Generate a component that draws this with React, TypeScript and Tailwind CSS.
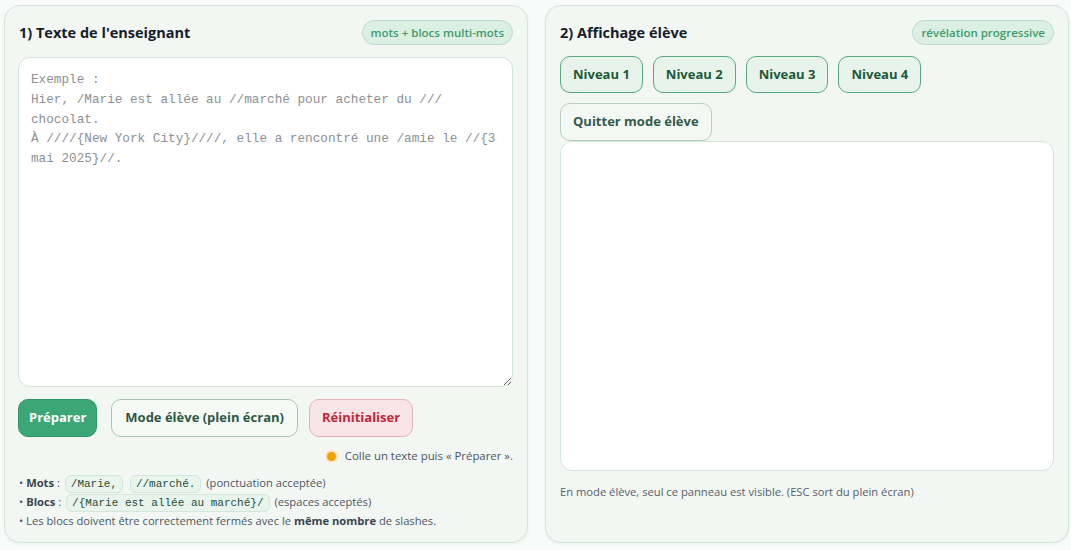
import React from "react";

const sans = "font-['Segoe_UI','Open_Sans','Noto_Sans',sans-serif]";
const mono = "font-['Liberation_Mono','DejaVu_Sans_Mono',monospace]";

const placeholder = `Exemple :
Hier, /Marie est allée au //marché pour acheter du /// chocolat.
À ////{New York City}////, elle a rencontré une /amie le //{3 mai 2025}//.`;

function Badge({ children }: { children: React.ReactNode }) {
  return (
    <span className="inline-flex h-[25px] items-center rounded-full border border-[#b9dcc7] bg-[#dcefe3] px-[8px] text-[11.5px] font-semibold text-[#3f9c6b]">
      {children}
    </span>
  );
}

function Chip({ children }: { children: React.ReactNode }) {
  return (
    <code
      className={`${mono} mx-[2px] rounded-[6px] border border-[#d3e7da] bg-[#e9f4ed] px-[5px] py-[2px] text-[11px] leading-[12px] text-[#1f4d35]`}
    >
      {children}
    </code>
  );
}

function Panel({
  title,
  badge,
  children,
}: {
  title: string;
  badge: string;
  children: React.ReactNode;
}) {
  return (
    <section className="flex h-[538px] flex-col overflow-hidden rounded-[16px] border border-[#d3e6db] bg-[#f2f7f4] px-[14px] pt-[14px] shadow-[0_1px_3px_rgba(30,80,50,0.06)]">
      <div className="flex h-[25px] items-center justify-between">
        <h2 className="text-[14.5px] font-bold text-[#171c2b]">{title}</h2>
        <Badge>{badge}</Badge>
      </div>
      {children}
    </section>
  );
}

export default function App() {
  return (
    <div className={`${sans} min-h-[550px] bg-[#f8fbf9] pl-[4px] pr-[2px] pt-[5px]`}>
      <div className="grid grid-cols-2 gap-[17px]">
        <Panel title="1) Texte de l'enseignant" badge="mots + blocs multi-mots">
          <textarea
            placeholder={placeholder}
            className={`${mono} -ml-[1px] mt-[12px] h-[330px] w-[calc(100%+1px)] shrink-0 rounded-[12px] border border-[#cfe4d7] bg-white px-[12px] pb-[10px] pt-[12px] text-[12.7px] leading-[19.75px] text-[#333] outline-none placeholder:text-[#8c9094]`}
          />
          <div className="-ml-[1px] mt-[12px] flex gap-[11px]">
            <button className="h-[38px] rounded-[10px] border border-[#2f9566] bg-[#3ba676] px-[10px] text-[13px] font-bold text-white">
              Préparer
            </button>
            <button className="ml-[3px] h-[38px] rounded-[10px] border border-[#a9c5b5] bg-[#f6faf7] px-[13px] text-[13px] font-bold text-[#2f5842]">
              Mode élève (plein écran)
            </button>
            <button className="h-[38px] rounded-[10px] border border-[#e6b3b9] bg-[#f9e5e7] px-[12px] text-[13px] font-bold text-[#c0283a]">
              Réinitialiser
            </button>
          </div>
          <div className="mt-[11px] flex h-[16px] items-center justify-end gap-[9px] text-[11.4px] text-[#4a5560]">
            <span className="h-[9px] w-[9px] rounded-full bg-[#f0a000] ring-2 ring-[#fbe6bd]" />
            <span>Colle un texte puis « Préparer ».</span>
          </div>
          <ul className="mt-[9px] text-[11.2px] leading-[19px] text-[#4d5863]">
            <li>
              • <b className="text-[#3a4550]">Mots</b> : <Chip>/Marie,</Chip> <Chip>//marché.</Chip>{" "}
              (ponctuation acceptée)
            </li>
            <li>
              • <b className="text-[#3a4550]">Blocs</b> : <Chip>/{"{"}Marie est allée au marché{"}"}/</Chip>{" "}
              (espaces acceptés)
            </li>
            <li>
              • Les blocs doivent être correctement fermés avec le{" "}
              <b className="text-[#3a4550]">même nombre</b> de slashes.
            </li>
          </ul>
        </Panel>

        <Panel title="2) Affichage élève" badge="révélation progressive">
          <div className="mt-[11px] flex flex-wrap gap-[10px]">
            {["Niveau 1", "Niveau 2", "Niveau 3", "Niveau 4"].map((n) => (
              <button
                key={n}
                className="h-[37px] rounded-[10px] border border-[#58a97f] bg-[#e7f3eb] px-[12px] text-[13px] font-bold text-[#1d5a38]"
              >
                {n}
              </button>
            ))}
            <button className="h-[38px] rounded-[10px] border border-[#b6cfc1] bg-[#f4f8f5] px-[12px] text-[13px] font-bold text-[#35594a]">
              Quitter mode élève
            </button>
          </div>
          <div className="h-[330px] shrink-0 rounded-[12px] border border-[#d3e6db] bg-white" />
          <p className="mt-[13px] text-[11.2px] text-[#56606a]">
            En mode élève, seul ce panneau est visible. (ESC sort du plein écran)
          </p>
        </Panel>
      </div>
    </div>
  );
}
